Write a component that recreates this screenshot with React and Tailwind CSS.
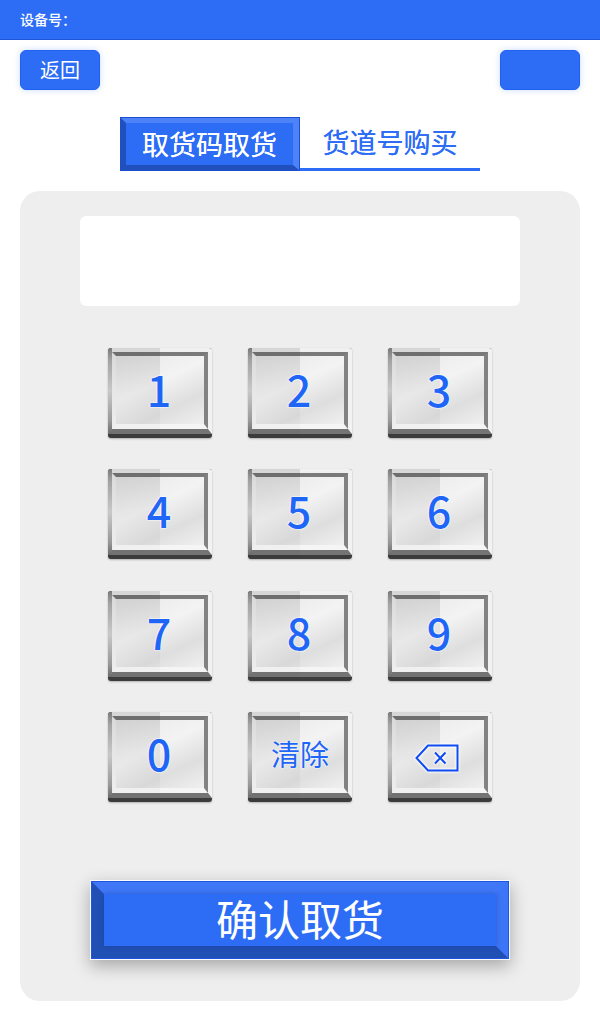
const font = { fontFamily: '"Noto Sans CJK SC", sans-serif' };

function Key({ children }) {
  return (
    <button className="relative w-[104px] h-[90px] flex-none rounded-[3px] overflow-hidden bg-[#3c3c3c] pb-[4px] flex shadow-[0_1px_2px_rgba(0,0,0,0.25)] text-[#1f65f6]">
      <span className="w-[4px] flex-none bg-[linear-gradient(to_bottom,#8a8a8a_0%,#b4b4b4_15%,#d2d2d2_50%,#9c9c9c_85%,#6c6c6c_100%)]" />
      <span className="flex-1 flex border-t-[4px] border-r-[4px] border-b-[5px] border-t-[#f0f0f0] border-r-[#f2f2f2] border-b-[#747474]">
        <span className="flex-1 flex items-center justify-center border-t-[4px] border-r-[4px] border-l-[4px] border-b-[5px] border-t-[#7a7a7a] border-r-[#828282] border-l-[#f2f2f2] border-b-[#f5f5f5] bg-[linear-gradient(155deg,#e8e8e8_0%,#f3f3f3_42%,#e8e8e8_58%,#dedede_72%,#f0f0f0_100%)]">
          {children}
        </span>
      </span>
      <span className="absolute left-0 top-0 bottom-0 w-[52px] bg-[linear-gradient(to_bottom,rgba(0,0,0,0.11)_0%,rgba(0,0,0,0.05)_45%,rgba(0,0,0,0.01)_100%)]" />
    </button>
  );
}

function Num({ children }) {
  return <span className="relative z-10 -mt-[3px] -ml-[2px] text-[43px] leading-none font-medium [text-shadow:0_0_1.5px_#fff,0_0_1.5px_#fff,0_0_1.5px_#fff]">{children}</span>;
}

export default function App() {
  return (
    <div style={font} className="w-[600px] h-[1024px] bg-white flex flex-col overflow-hidden">
      <div className="h-10 flex-none bg-[#2d6df6] border-b border-[#1f56d8] flex items-center px-5 text-white text-[14px] font-medium">设备号：</div>
      <div className="flex justify-between px-5 mt-[10px]">
        <button className="w-20 h-10 rounded-md bg-[#2d6df6] border border-[#1f62ee] shadow-[0_0_6px_rgba(45,109,246,0.25)] text-white text-[20px]">返回</button>
        <button className="w-20 h-10 rounded-md bg-[#2d6df6] border border-[#1f62ee] shadow-[0_0_6px_rgba(45,109,246,0.25)]" />
      </div>
      <div className="flex justify-center mt-[27px]">
        <div className="w-[180px] h-[54px] border border-[#1a4fd0]">
          <div className="w-full h-full flex items-center justify-center bg-[#2d6df6] border-[5px] border-r-[6px] border-t-[#4d82f8] border-r-[#4d82f8] border-l-[#2150bc] border-b-[#2150bc] text-white text-[27px] [text-shadow:0_0_0.6px_#fff]">取货码取货</div>
        </div>
        <div className="w-[180px] h-[54px] flex items-center justify-center border-b-[3px] border-[#2d6df6] text-[#2d6df6] text-[27px] [text-shadow:0_0_0.6px_#2d6df6]">货道号购买</div>
      </div>
      <div className="mx-5 mt-5 h-[810px] rounded-[20px] bg-[#eeeeee] flex flex-col items-center pt-[25px]">
        <div className="w-[440px] h-[90px] flex-none rounded-md bg-white" />
        <div className="grid grid-cols-[104px_104px_104px] gap-x-9 gap-y-[31.33px] mt-[42px]">
          {["1","2","3","4","5","6","7","8","9","0"].map((n) => <Key key={n}><Num>{n}</Num></Key>)}
          <Key><span className="relative z-10 text-[29px] leading-none [text-shadow:0_0_1.5px_#fff,0_0_1.5px_#fff]">清除</span></Key>
          <Key>
            <svg className="relative z-10 mt-[9px] mr-[6px] [filter:drop-shadow(0_0_1px_#fff)_drop-shadow(0_0_1px_#fff)]" width="44" height="28" viewBox="0 0 44 28" fill="none" stroke="#0f4bf2" strokeWidth="2">
              <path d="M13 1.5H42.5V26.5H13L1.5 14Z" />
              <path d="M20 8.5L30.5 19.5M30.5 8.5L20 19.5" />
            </svg>
          </Key>
        </div>
        <button className="mt-[78px] w-[420px] h-20 flex-none border border-white/70 shadow-[0_6px_16px_rgba(0,0,0,0.3)]">
          <span className="w-full h-full flex border border-[#1f56e0]">
            <span className="w-full h-full flex items-center justify-center bg-[#2d6df6] border-[12px] border-t-[#3f77f7] border-r-[#3c75f7] border-l-[#2150b4] border-b-[#2150b4] text-white text-[42px] leading-none">
              <span className="flex-1 h-full flex items-center justify-center pb-[3px] shadow-[0_0_5px_rgba(20,50,130,0.4)]">确认取货</span>
            </span>
          </span>
        </button>
      </div>
    </div>
  );
}
